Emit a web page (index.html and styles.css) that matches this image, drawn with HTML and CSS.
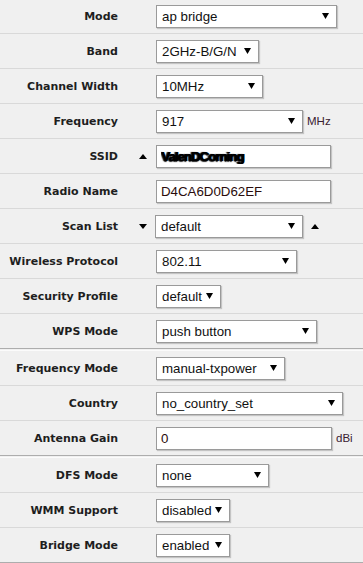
FILE: index.html
```html
<!DOCTYPE html>
<html lang="en">
<head>
    <meta charset="UTF-8">
    <meta name="viewport" content="width=device-width, initial-scale=1.0">
    <title>Wireless Settings</title>
    <link rel="stylesheet" href="styles.css">
</head>
<body>
    <form class="settings">
        <!-- Radio -->
        <div class="row">
            <label class="label">Mode</label>
            <span class="toggle"></span>
            <div class="field"><select class="select w-mode"><option>ap bridge</option></select></div>
        </div>
        <div class="row">
            <label class="label">Band</label>
            <span class="toggle"></span>
            <div class="field"><select class="select w-band"><option>2GHz-B/G/N</option></select></div>
        </div>
        <div class="row">
            <label class="label">Channel Width</label>
            <span class="toggle"></span>
            <div class="field"><select class="select w-width"><option>10MHz</option></select></div>
        </div>
        <div class="row">
            <label class="label">Frequency</label>
            <span class="toggle"></span>
            <div class="field"><select class="select w-freq"><option>917</option></select><span class="unit">MHz</span></div>
        </div>
        <div class="row">
            <label class="label">SSID</label>
            <span class="toggle"><span class="arrow-up"></span></span>
            <div class="field"><input class="text w-text obscured" type="text" value="ValenDCorning"></div>
        </div>
        <div class="row">
            <label class="label">Radio Name</label>
            <span class="toggle"></span>
            <div class="field"><input class="text w-text" type="text" value="D4CA6D0D62EF"></div>
        </div>
        <div class="row">
            <label class="label">Scan List</label>
            <span class="toggle"><span class="arrow-down"></span></span>
            <div class="field"><select class="select w-scan"><option>default</option></select><span class="arrow-up after"></span></div>
        </div>
        <div class="row">
            <label class="label">Wireless Protocol</label>
            <span class="toggle"></span>
            <div class="field"><select class="select w-proto"><option>802.11</option></select></div>
        </div>
        <div class="row">
            <label class="label">Security Profile</label>
            <span class="toggle"></span>
            <div class="field"><select class="select w-short"><option>default</option></select></div>
        </div>
        <div class="row group-end">
            <label class="label">WPS Mode</label>
            <span class="toggle"></span>
            <div class="field"><select class="select w-wps"><option>push button</option></select></div>
        </div>
        <div class="divider"></div>

        <!-- Regulatory -->
        <div class="row">
            <label class="label">Frequency Mode</label>
            <span class="toggle"></span>
            <div class="field"><select class="select w-fmode"><option>manual-txpower</option></select></div>
        </div>
        <div class="row">
            <label class="label">Country</label>
            <span class="toggle"></span>
            <div class="field"><select class="select w-country"><option>no_country_set</option></select></div>
        </div>
        <div class="row group-end">
            <label class="label">Antenna Gain</label>
            <span class="toggle"></span>
            <div class="field"><input class="text w-gain" type="text" value="0"><span class="unit">dBi</span></div>
        </div>
        <div class="divider"></div>

        <!-- Misc -->
        <div class="row">
            <label class="label">DFS Mode</label>
            <span class="toggle"></span>
            <div class="field"><select class="select w-dfs"><option>none</option></select></div>
        </div>
        <div class="row">
            <label class="label">WMM Support</label>
            <span class="toggle"></span>
            <div class="field"><select class="select w-toggle"><option>disabled</option></select></div>
        </div>
        <div class="row group-end">
            <label class="label">Bridge Mode</label>
            <span class="toggle"></span>
            <div class="field"><select class="select w-toggle"><option>enabled</option></select></div>
        </div>
        <div class="divider"></div>
    </form>
</body>
</html>
```

FILE: styles.css
```css
body {
    margin: 0;
    padding: 0;
    background-color: #f0f0f0;
    font-family: "Liberation Sans", Arial, sans-serif;
    color: #1a1a1a;
}
.settings {
    margin-top: -1px;
}
.row {
    display: grid;
    grid-template-columns: 118px 38px 1fr;
    align-items: center;
    height: 34px;
    border-bottom: 1px solid #d9d9d9;
}
.row.group-end {
    border-bottom-color: #adadad;
}
.divider {
    margin-top: 1px;
    height: 0;
    border-top: 1px solid #fbfbfb;
}
.label {
    text-align: right;
    font-family: "DejaVu Sans", Verdana, sans-serif;
    font-weight: bold;
    font-size: 11px;
    color: #1e1e1e;
}
.toggle {
    display: flex;
    justify-content: flex-end;
    padding-right: 9px;
}
.field {
    display: flex;
    align-items: center;
}
.arrow-up {
    width: 0;
    height: 0;
    border-left: 4.5px solid transparent;
    border-right: 4.5px solid transparent;
    border-bottom: 5px solid #000;
}
.arrow-down {
    width: 0;
    height: 0;
    border-left: 4.5px solid transparent;
    border-right: 4.5px solid transparent;
    border-top: 5px solid #000;
}
.arrow-up.after {
    margin-left: 8px;
}
.select, .text {
    box-sizing: border-box;
    height: 23px;
    margin: 0;
    padding: 0 0 0 5px;
    font-family: "Liberation Sans", Arial, sans-serif;
    font-size: 13.3px;
    color: #111;
    background-color: #fff;
    border: 1px solid #9a9a9a;
    border-radius: 0;
    box-shadow: 1px 1px 1px rgba(0, 0, 0, 0.18);
    outline: none;
}
.select {
    -webkit-appearance: none;
    appearance: none;
    background-image: url("data:image/svg+xml,%3Csvg xmlns='http://www.w3.org/2000/svg' width='7' height='6'%3E%3Cpath d='M0 0h7L3.5 6z' fill='%23000'/%3E%3C/svg%3E");
    background-repeat: no-repeat;
    background-position: right 7px center;
}
.text {
    padding-left: 4px;
    color: #2a0c0c;
}
.obscured {
    color: #000;
    font-weight: bold;
    letter-spacing: -1px;
    text-shadow: 1px 0 0 #000, 0 1px 1px #222, -1px 0 1px #333;
}
.unit {
    margin-left: 4px;
    font-size: 11.5px;
    color: #3a2030;
}
.w-mode { width: 181px; }
.w-band { width: 103px; }
.w-width { width: 107px; }
.w-freq { width: 147px; }
.w-text { width: 175px; }
.w-scan { width: 148px; margin-left: -1px; }
.w-proto { width: 141px; }
.w-short { width: 65px; }
.w-wps { width: 161px; }
.w-fmode { width: 129px; }
.w-country { width: 187px; }
.w-gain { width: 176px; }
.w-dfs { width: 113px; }
.w-toggle { width: 74px; }
```
